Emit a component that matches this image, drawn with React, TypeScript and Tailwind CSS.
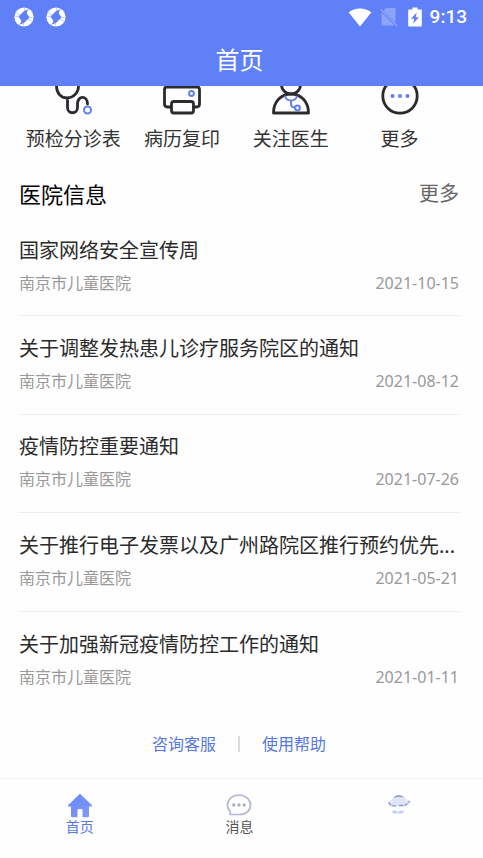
import type { ReactNode } from "react";

const notices = [
  { title: "国家网络安全宣传周", date: "2021-10-15" },
  { title: "关于调整发热患儿诊疗服务院区的通知", date: "2021-08-12" },
  { title: "疫情防控重要通知", date: "2021-07-26" },
  { title: "关于推行电子发票以及广州路院区推行预约优先...", date: "2021-05-21" },
  { title: "关于加强新冠疫情防控工作的通知", date: "2021-01-11" },
];

function PinwheelIcon() {
  return (
    <svg viewBox="0 0 20 20" className="size-5" aria-hidden="true">
      <circle cx="10" cy="10" r="9.6" fill="#fff" />
      <path
        d="M14.500 2.500C12.500 3.500 11.800 5 12 6.500L14 9C15.500 10.500 17 11 18.500 10.500M17.500 14.500C16.500 12.500 15 11.800 13.500 12L11 14C9.500 15.500 9 17 9.500 18.500M5.500 17.500C7.500 16.500 8.200 15 8 13.500L6 11C4.500 9.500 3 9 1.500 9.500M2.500 5.500C3.500 7.500 5 8.200 6.500 8L9 6C10.500 4.500 11 3 10.500 1.500"
        fill="none"
        stroke="#5f80f6"
        strokeWidth=".5"
      />
      <path d="M14.500 2.500C12 3 9 4.500 5.200 9 4.500 10 5.500 11 6.500 12.200 7.800 13.800 7.500 15.500 5.500 17.500 8 17 11 15.500 14.800 11 15.500 10 14.500 9 13.500 7.800 12.200 6.200 12.500 4.500 14.500 2.500Z" fill="#5f80f6" />
    </svg>
  );
}

function StatusBar() {
  return (
    <div className="flex h-[34px] items-center pl-3.5 pr-4">
      <div className="flex gap-3">
        <PinwheelIcon />
        <PinwheelIcon />
      </div>
      <div className="ml-auto flex items-center">
        <svg viewBox="0 0 24 20" className="h-5 w-6" aria-hidden="true">
          <path d="M.6 5.2C7 .1 17 .1 23.4 5.2L12 19.4Z" fill="#fff" />
        </svg>
        <svg viewBox="0 0 18 20" className="ml-2 h-5 w-[18px]" aria-hidden="true">
          <path d="M6 1h9.500v14.200L3.500 3.500ZM1.500 5.200 14.500 18.500H1.500Z" fill="#8da4f9" />
          <path d="M.8 2.200 17 18.800" stroke="#8da4f9" strokeWidth="1.400" />
        </svg>
        <svg viewBox="0 0 14 20" className="ml-2.5 h-5 w-3.5" aria-hidden="true">
          <path d="M4.500.500h5v2H13a.8.8 0 0 1 .8.8v15.400a.8.8 0 0 1-.8.8H1a.8.8 0 0 1-.8-.8V3.300a.8.8 0 0 1 .8-.8h3.500Z" fill="#fff" />
          <path d="M8.700 5.500 3 11.800h3.200L5.200 16.500 11 10.200H7.800Z" fill="#5f80f6" />
        </svg>
        <span className="ml-2 font-[Roboto,sans-serif] text-[19px] leading-6 font-medium">9:13</span>
      </div>
    </div>
  );
}

const ink = { fill: "none", stroke: "#2a2a2f", strokeWidth: 2.8, strokeLinecap: "round", strokeLinejoin: "round" } as const;
const blue = { fill: "none", stroke: "#5f82e6", strokeWidth: 2, strokeLinecap: "round" } as const;

const shortcuts: { label: string; art: ReactNode }[] = [
  {
    label: "预检分诊表",
    art: (
      <>
        <path {...ink} d="M7 3H5.500Q3.500 3 3.500 5v5c0 7 4.500 12 10.500 12S25.500 17 25.500 10V5q0-2-2-2H22M14.500 22v9.500c0 7 10 7 10 0v-3.500c0-9 10-8.500 10 0" />
        <circle {...blue} cx="34.500" cy="34" r="3.500" fill="#fefefe" />
      </>
    ),
  },
  {
    label: "病历复印",
    art: (
      <>
        <path {...ink} d="M8 10V3h24v7M8.500 31H5.500Q2.500 31 2.500 28V13.500Q2.500 11 5 11h30q2.500 0 2.500 2.500V28q0 3-3 3h-3" />
        <rect {...ink} x="9.500" y="25.500" width="22" height="11.500" rx="2.500" />
        <circle {...blue} cx="29.500" cy="17.500" r="2.400" />
      </>
    ),
  },
  {
    label: "关注医生",
    art: (
      <>
        <circle {...ink} cx="20" cy="8.500" r="9.500" />
        <path {...ink} d="M2.500 37C2.500 25.500 10 18 20 18s17.500 7.500 17.500 19Z" />
        <path {...blue} d="M14 20.500c1 2.500 3 4 6 4s5-1.500 6-4M20 24.500v3c0 3 1.500 4 4 4" />
        <circle {...blue} cx="26.500" cy="32" r="2.400" />
      </>
    ),
  },
  {
    label: "更多",
    art: (
      <>
        <circle {...ink} cx="20" cy="20" r="17.200" />
        <g fill="#5f82e6">
          <circle cx="12.500" cy="20" r="2" />
          <circle cx="20" cy="20" r="2" />
          <circle cx="27.500" cy="20" r="2" />
        </g>
      </>
    ),
  },
];

function Shortcuts() {
  return (
    <nav className="grid grid-cols-4 pr-[5px]">
      {shortcuts.map((s) => (
        <button key={s.label} type="button" className="flex flex-col items-center gap-2 whitespace-nowrap">
          <svg viewBox="0 0 40 40" className="size-10" aria-hidden="true">
            {s.art}
          </svg>
          <span className="text-[19px] leading-[30px] text-[#333]">{s.label}</span>
        </button>
      ))}
    </nav>
  );
}

function Notices() {
  return (
    <section>
      <div className="mt-6 flex items-center justify-between">
        <h2 className="text-[22px] leading-8 font-normal text-black">医院信息</h2>
        <a href="#more" className="text-[20px] leading-7 text-[#666]">更多</a>
      </div>
      <ul className="mt-2 grid min-h-[492px] auto-rows-fr divide-y divide-[#ececec]">
        {notices.map((n) => (
          <li key={n.title} className="flex min-w-0 flex-col justify-center gap-1 pb-1">
            <a href="#notice" className="truncate text-[20px] leading-8 text-[#2b2b2b]">{n.title}</a>
            <p className="flex items-center justify-between text-[16px] leading-6 text-[#999]">
              <span>南京市儿童医院</span>
              <time dateTime={n.date}>{n.date}</time>
            </p>
          </li>
        ))}
      </ul>
    </section>
  );
}

function TabBar() {
  return (
    <nav className="grid h-20 shrink-0 grid-cols-3 border-t border-[#f2f2f2] pr-1 text-[14px] leading-[18px]">
      <button type="button" className="flex flex-col items-center pt-3.5 text-[#5578e0]">
        <svg viewBox="0 0 26 25" className="h-[25px] w-[26px]" aria-hidden="true">
          <defs>
            <linearGradient id="home" x1="0" y1="0" x2="1" y2="1">
              <stop offset="0" stopColor="#6688f2" />
              <stop offset="1" stopColor="#8399fb" />
            </linearGradient>
          </defs>
          <path d="M13 .8 25 12.300q.5 1.200-.8 1.200H22V23q0 1.300-1.300 1.300H15.500V17q0-1-1-1h-3q-1 0-1 1v7.300H5.300Q4 24.300 4 23V13.500H1.800q-1.300 0-.8-1.200Z" fill="url(#home)" />
        </svg>
        <span>首页</span>
      </button>
      <button type="button" className="flex flex-col items-center pt-3.5 text-[#555]">
        <svg viewBox="0 0 26 25" className="h-[25px] w-[26px]" aria-hidden="true">
          <path d="M4 21.500h9.500c6.500 0 11-4 11-9.500S19.500 2 13 2 1.500 6.500 1.500 12c0 3 1.200 5 3 6.700Z" fill="none" stroke="#b5b9d0" strokeWidth="1.700" strokeLinejoin="round" />
          <g fill="#adb1cb">
            <circle cx="7.800" cy="12" r="1.700" />
            <circle cx="13" cy="12" r="1.700" />
            <circle cx="18.200" cy="12" r="1.700" />
          </g>
        </svg>
        <span>消息</span>
      </button>
      <button type="button" aria-label="我的" className="flex flex-col items-center pt-3.5">
        <svg viewBox="0 0 26 25" className="h-[25px] w-[26px]" aria-hidden="true">
          <path d="M2 9.500C6 8 7 3 13 2.300c5 0 6 4 11 6.200-1 3-3 4.500-5.500 5H6C4 13 3 11.500 2 9.500Z" fill="#dfe4f8" />
          <path d="M7.500 5C9 2 15 1.200 18 4.500c-3-1-7-1.200-10.500.5Z" fill="#8a8fb4" />
          <path d="M2.500 9.500 5 12.500l5 .7M13 12.500h5l4-2" fill="none" stroke="#8f9acd" strokeWidth="1.300" strokeDasharray="4 1" />
          <path d="M6.500 18.500q6 2 12-.5" fill="none" stroke="#c6cfee" strokeWidth="2.500" strokeDasharray="5 1" />
          <path d="m22.500 8 1.500.5-2 2" fill="none" stroke="#8793c8" />
        </svg>
      </button>
    </nav>
  );
}

export default function App() {
  return (
    <div className="flex min-h-screen flex-col bg-[#fefefe] font-['Noto_Sans','Noto_Sans_CJK_SC',sans-serif]">
      <header className="relative z-10 shrink-0 bg-[#5f80f6] text-white">
        <StatusBar />
        <h1 className="py-1 pr-1 text-center text-[24px] leading-[44px]">首页</h1>
      </header>
      <main className="-mt-2.5 flex-1 pr-6 pl-[19px]">
        <Shortcuts />
        <Notices />
        <div className="mt-5 flex items-center justify-center gap-[22px] text-[16px] leading-7 text-[#5578e0]">
          <a href="#service">咨询客服</a>
          <span className="h-4 w-0.5 bg-[#dcdcdc]" />
          <a href="#help">使用帮助</a>
        </div>
      </main>
      <TabBar />
    </div>
  );
}
